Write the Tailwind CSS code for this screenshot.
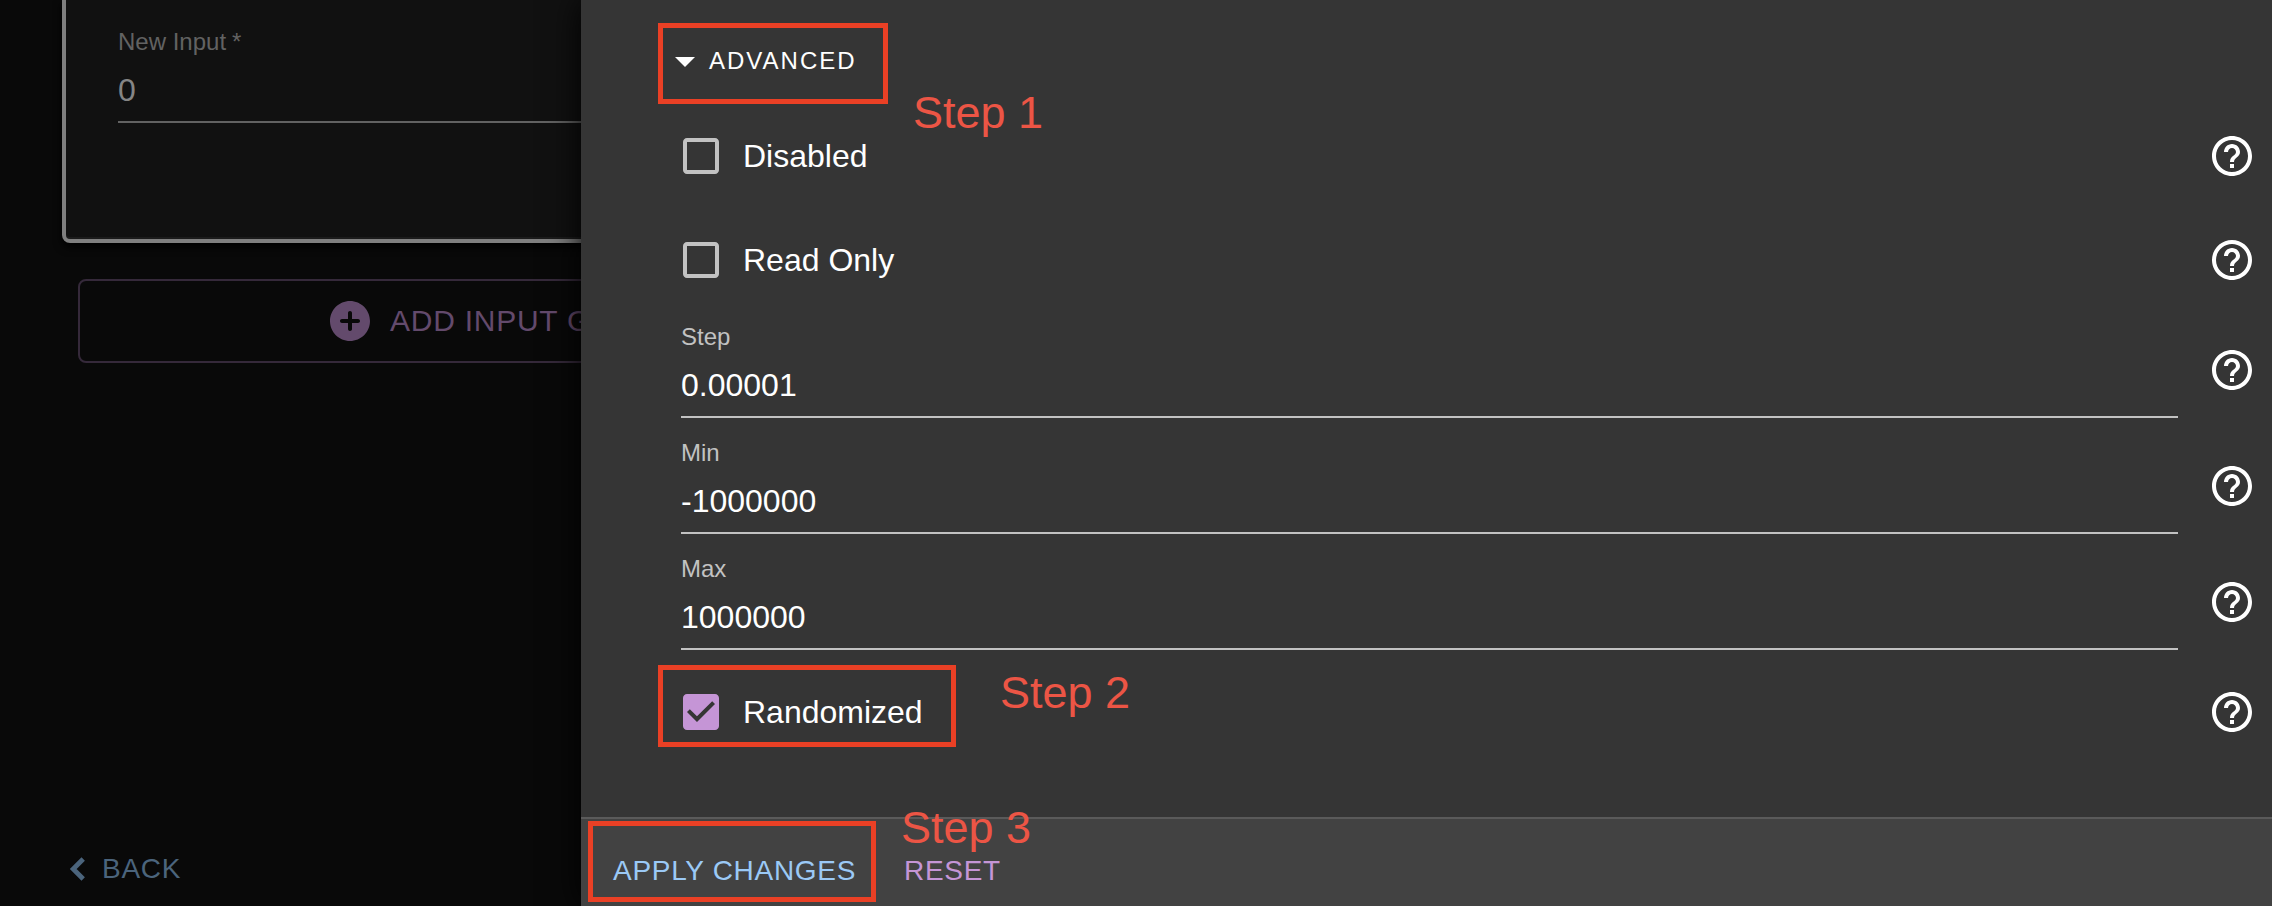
<!DOCTYPE html>
<html lang="en">
<head>
<meta charset="utf-8">
<meta name="viewport" content="width=device-width, initial-scale=1">
<title>Input settings</title>
<script src="https://cdn.jsdelivr.net/npm/@tailwindcss/browser@4"></script>
</head>
<body class="bg-[#090909] font-['Liberation_Sans',Arial,sans-serif] text-white">
<svg class="hidden" aria-hidden="true">
  <symbol id="help" viewBox="0 0 24 24"><path d="M11 18h2v-2h-2v2zm1-16C6.48 2 2 6.48 2 12s4.48 10 10 10 10-4.48 10-10S17.52 2 12 2zm0 18c-4.41 0-8-3.59-8-8s3.59-8 8-8 8 3.59 8 8-3.59 8-8 8zm0-14c-2.21 0-4 1.79-4 4h2c0-1.1.9-2 2-2s2 .9 2 2c0 2-3 1.75-3 5h2c0-2.25 3-2.5 3-5 0-2.21-1.79-4-4-4z"/></symbol>
  <symbol id="box" viewBox="0 0 24 24"><path d="M19 5v14H5V5h14m0-2H5c-1.1 0-2 .9-2 2v14c0 1.1.9 2 2 2h14c1.1 0 2-.9 2-2V5c0-1.1-.9-2-2-2z"/></symbol>
  <symbol id="box-checked" viewBox="0 0 24 24"><path d="M19 3H5c-1.11 0-2 .9-2 2v14c0 1.1.89 2 2 2h14c1.11 0 2-.9 2-2V5c0-1.1-.89-2-2-2zm-9 14l-5-5 1.41-1.41L10 14.17l7.59-7.59L19 8l-9 9z"/></symbol>
</svg>
<div class="flex h-screen overflow-hidden">

  <!-- Page behind the drawer -->
  <div class="flex w-[581px] flex-none flex-col overflow-hidden">
    <div class="ml-[62px] w-[873px] rounded-b-lg border-4 border-t-0 border-[#7f7f7f] bg-[#111111] px-[52px] pt-[27px] pb-[116px] shadow-[0_4px_8px_#000000,inset_0_-2px_0_#1c1c1c]">
      <label for="new-input" class="block text-[24px] leading-[30px] text-[#626262]">New Input<span class="ml-1.5">*</span></label>
      <input id="new-input" type="text" value="0" class="block h-[66px] w-full border-b-2 border-[#626262] bg-transparent pt-0.5 text-[32px] text-[#858585] outline-none">
    </div>
    <button type="button" class="mt-9 ml-[78px] flex h-[84px] w-[841px] items-center gap-4 rounded-lg border-2 border-[#35293a] pl-[246px] text-[30px] tracking-wide whitespace-nowrap text-[#634a6c]">
      <svg class="size-12 flex-none" viewBox="0 0 24 24" fill="currentColor" aria-hidden="true"><path d="M12 2C6.48 2 2 6.48 2 12s4.48 10 10 10 10-4.48 10-10S17.52 2 12 2zm4 11h-3v3c0 .55-.45 1-1 1s-1-.45-1-1v-3H8c-.55 0-1-.45-1-1s.45-1 1-1h3V8c0-.55.45-1 1-1s1 .45 1 1v3h3c.55 0 1 .45 1 1s-.45 1-1 1z"/></svg>
      <span class="pb-0.5">ADD INPUT GROUP</span>
    </button>
    <button type="button" class="mt-auto mb-[13px] ml-[54px] flex items-center self-start text-[28px] tracking-wide text-[#4b647c]">
      <svg class="size-12" viewBox="0 0 24 24" fill="none" stroke="currentColor" stroke-width="2.4" aria-hidden="true"><path d="M14.6 7L9.6 12l5 5"/></svg>
      BACK
    </button>
  </div>

  <!-- Settings drawer -->
  <main class="relative flex min-w-0 flex-1 flex-col bg-[#353535] shadow-[0_0_32px_#000000]">
    <form class="flex flex-1 flex-col pr-4 pl-24">
      <button type="button" aria-expanded="true" class="mt-[37px] mb-[29px] -ml-4 flex h-12 items-center self-start text-[24px] tracking-[2px]">
        <svg class="size-12" viewBox="0 0 24 24" fill="currentColor" aria-hidden="true"><path d="M7 10l5 5 5-5z"/></svg>
        ADVANCED
      </button>
      <div class="flex flex-col gap-5">
        <div class="flex h-[84px] items-center justify-between">
          <label class="flex items-center gap-[18px] text-[32px]">
            <span class="grid size-12"><input type="checkbox" class="peer col-start-1 row-start-1 size-12 appearance-none"><svg class="pointer-events-none col-start-1 row-start-1 size-12 fill-[#c2c2c2]"><use href="#box"/></svg></span>
            Disabled
          </label>
          <button type="button" aria-label="Help for Disabled"><svg class="size-12 fill-white"><use href="#help"/></svg></button>
        </div>
        <div class="flex h-[84px] items-center justify-between">
          <label class="flex items-center gap-[18px] text-[32px]">
            <span class="grid size-12"><input type="checkbox" class="peer col-start-1 row-start-1 size-12 appearance-none"><svg class="pointer-events-none col-start-1 row-start-1 size-12 fill-[#c2c2c2]"><use href="#box"/></svg></span>
            Read Only
          </label>
          <button type="button" aria-label="Help for Read Only"><svg class="size-12 fill-white"><use href="#help"/></svg></button>
        </div>
        <div class="ml-1 flex items-center gap-[30px]">
          <div class="flex-1">
            <label for="step" class="block text-[24px] leading-[30px] text-[#c2c2c2]">Step</label>
            <input id="step" type="text" value="0.00001" class="block h-[66px] w-full border-b-2 border-[#c2c2c2] bg-transparent pt-0.5 text-[32px] outline-none">
          </div>
          <button type="button" aria-label="Help for Step"><svg class="size-12 fill-white"><use href="#help"/></svg></button>
        </div>
        <div class="ml-1 flex items-center gap-[30px]">
          <div class="flex-1">
            <label for="min" class="block text-[24px] leading-[30px] text-[#c2c2c2]">Min</label>
            <input id="min" type="text" value="-1000000" class="block h-[66px] w-full border-b-2 border-[#c2c2c2] bg-transparent pt-0.5 text-[32px] outline-none">
          </div>
          <button type="button" aria-label="Help for Min"><svg class="size-12 fill-white"><use href="#help"/></svg></button>
        </div>
        <div class="ml-1 flex items-center gap-[30px]">
          <div class="flex-1">
            <label for="max" class="block text-[24px] leading-[30px] text-[#c2c2c2]">Max</label>
            <input id="max" type="text" value="1000000" class="block h-[66px] w-full border-b-2 border-[#c2c2c2] bg-transparent pt-0.5 text-[32px] outline-none">
          </div>
          <button type="button" aria-label="Help for Max"><svg class="size-12 fill-white"><use href="#help"/></svg></button>
        </div>
        <div class="flex h-[84px] items-center justify-between">
          <label class="flex items-center gap-[18px] text-[32px]">
            <span class="grid size-12"><input type="checkbox" checked class="peer col-start-1 row-start-1 size-12 appearance-none"><svg class="pointer-events-none col-start-1 row-start-1 size-12 fill-[#c595d6]"><use href="#box-checked"/></svg></span>
            Randomized
          </label>
          <button type="button" aria-label="Help for Randomized"><svg class="size-12 fill-white"><use href="#help"/></svg></button>
        </div>
      </div>
    </form>
    <footer class="flex gap-4 border-t-2 border-[#5a5a5a] bg-[#424242] px-4 pt-4 text-[28px] leading-[49px] tracking-wide">
      <button type="button" class="px-4 py-[11px] text-[#9bc9f6]">APPLY CHANGES</button>
      <button type="button" class="px-4 py-[11px] text-[#c595d6]">RESET</button>
    </footer>

    <!-- Tutorial annotations over the drawer -->
    <div class="pointer-events-none absolute inset-0 text-[45px] leading-[50px] text-[#ec5545]">
      <div class="absolute top-[23px] left-[77px] h-[81px] w-[230px] border-5 border-[#ea4025]"></div>
      <p class="absolute top-[88px] left-[332px]">Step 1</p>
      <div class="absolute top-[665px] left-[77px] h-[82px] w-[298px] border-5 border-[#ea4025]"></div>
      <p class="absolute top-[668px] left-[419px]">Step 2</p>
      <div class="absolute top-[821px] left-[7px] h-[81px] w-[288px] border-5 border-[#ea4025]"></div>
      <p class="absolute top-[803px] left-[320px]">Step 3</p>
    </div>
  </main>
</div>
</body>
</html>
